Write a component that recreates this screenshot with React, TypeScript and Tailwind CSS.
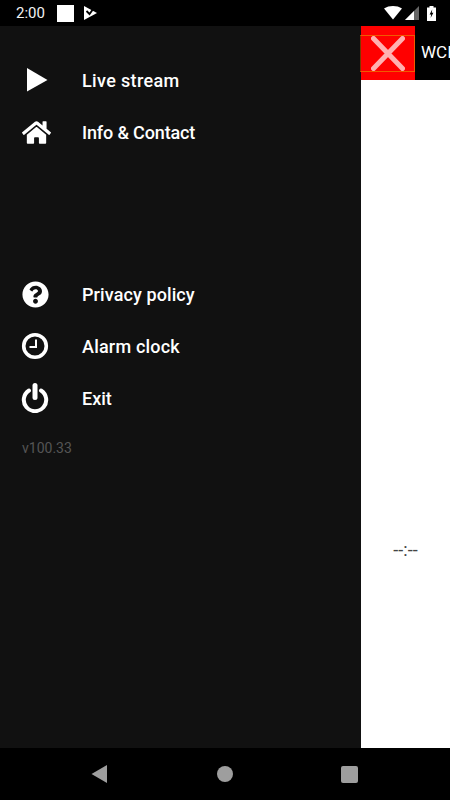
import React from 'react';
import { FaHome, FaQuestionCircle } from 'react-icons/fa';

type MenuRowProps = {
    icon: React.ReactNode;
    label: string;
    tracking?: string;
};

const PlayIcon = () => (
    <svg width="22" height="24" viewBox="0 0 22 24" className="ml-[6px]">
        <path d="M0 0 L20.5 12 L0 23.5 Z" fill="#fff" />
    </svg>
);

const ClockIcon = () => (
    <svg width="28" height="28" viewBox="0 0 28 28">
        <circle cx="14" cy="14" r="11.3" fill="none" stroke="#fff" strokeWidth="3.6" />
        <path d="M15 7.5 V15 H8.5" fill="none" stroke="#fff" strokeWidth="2" />
    </svg>
);

const PowerIcon = () => (
    <svg width="28" height="30" viewBox="0 0 28 30">
        <path d="M8 7.5 A11.2 11.2 0 1 0 20 7.5" fill="none" stroke="#fff" strokeWidth="4" strokeLinecap="round" />
        <path d="M14 2.5 V14.5" fill="none" stroke="#fff" strokeWidth="5" strokeLinecap="round" />
    </svg>
);

const MenuRow = ({ icon, label, tracking = '' }: MenuRowProps) => (
    <div className="flex h-[52px] items-center pl-[21px]">
        <div className="flex w-[61px] items-center">{icon}</div>
        <span className={`font-['Roboto',sans-serif] text-[18px] font-medium text-white ${tracking}`}>{label}</span>
    </div>
);

const StatusBar = () => (
    <div className="flex h-[26px] items-center bg-black pl-4 pr-[14px]">
        <span className="font-['Roboto',sans-serif] text-[15px] text-[#f2f2f2]">2:00</span>
        <div className="ml-[12px] h-[17px] w-[17px] bg-white" />
        <svg width="13" height="14" viewBox="0 0 13 14" className="ml-[10px]">
            <path d="M0 0 L13 7 L0 14 Z" fill="#fff" />
            <path d="M2.5 5 L5.5 8 L11 0.5" fill="none" stroke="#000" strokeWidth="1.8" />
        </svg>
        <div className="ml-auto flex items-center">
            <svg width="18" height="14" viewBox="0 0 18 14">
                <path d="M0 2.5 C5 -0.8 13 -0.8 18 2.5 L9 13.5 Z" fill="#fff" />
            </svg>
            <svg width="14" height="14" viewBox="0 0 14 14" className="ml-[3px]">
                <path d="M14 0 V14 H0 Z" fill="#666" />
                <path d="M9 5 V14 H0 Z" fill="#fff" />
            </svg>
            <svg width="9" height="15" viewBox="0 0 9 15" className="ml-[8px]">
                <path d="M2.5 0 H6.5 V1.5 H9 V15 H0 V1.5 H2.5 Z" fill="#fff" />
                <path d="M5.2 3.5 L2.6 8.5 H4.2 L3.6 12 L6.4 6.8 H4.8 Z" fill="#000" />
            </svg>
        </div>
    </div>
);

export default function App() {
    return (
        <div className="flex h-[800px] w-[450px] flex-col overflow-hidden bg-black">
            <StatusBar />
            <div className="flex h-[722px]">
                <div className="w-[361px] shrink-0 bg-[#111111] pt-[28px]">
                    <MenuRow icon={<PlayIcon />} label="Live stream" tracking="tracking-[0.35px]" />
                    <MenuRow icon={<FaHome size={29} color="#fff" className="ml-px" />} label="Info & Contact" tracking="tracking-[-0.15px]" />
                    <div className="h-[110px]" />
                    <MenuRow icon={<FaQuestionCircle size={27} color="#fff" className="ml-px" />} label="Privacy policy" tracking="tracking-[0.1px]" />
                    <MenuRow icon={<ClockIcon />} label="Alarm clock" tracking="tracking-[0.2px]" />
                    <MenuRow icon={<PowerIcon />} label="Exit" />
                    <p className="mt-[14px] pl-[22px] font-['Roboto',sans-serif] text-[14px] leading-5 text-[#555555]">v100.33</p>
                </div>
                <div className="flex w-[89px] shrink-0 flex-col">
                    <div className="flex h-[54px] shrink-0 items-center bg-black">
                        <div className="flex h-[54px] w-[54px] shrink-0 items-center bg-[#ff0000]">
                            <div className="-ml-px flex h-[37px] w-[55px] shrink-0 items-center justify-center border border-[#f05a00] border-l-[#7a3a00]">
                                <svg width="34" height="35" viewBox="0 0 34 35">
                                    <path d="M2.5 2.5 L31.5 32.5 M31.5 2.5 L2.5 32.5" stroke="#ffb0b0" strokeWidth="5" strokeLinecap="round" />
                                </svg>
                            </div>
                        </div>
                        <span className="ml-[6px] whitespace-nowrap font-['Roboto',sans-serif] text-[17px] text-white">WCI</span>
                    </div>
                    <div className="flex flex-1 justify-center bg-white pt-[456px]">
                        <span className="font-['Roboto',sans-serif] text-[18px] leading-7 text-[#444444]">--:--</span>
                    </div>
                </div>
            </div>
            <div className="flex flex-1 items-center bg-black">
                <svg width="16" height="18" viewBox="0 0 16 18" className="ml-[91px]">
                    <path d="M0.5 9 L16 0 V18 Z" fill="#9e9e9e" />
                </svg>
                <div className="ml-[110px] h-4 w-4 rounded-full bg-[#9e9e9e]" />
                <div className="ml-[108px] h-[17px] w-[17px] rounded-[2px] bg-[#9e9e9e]" />
            </div>
        </div>
    );
}
